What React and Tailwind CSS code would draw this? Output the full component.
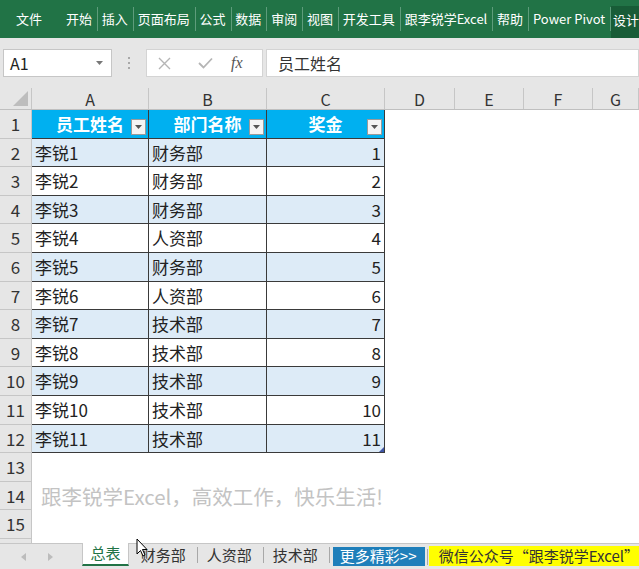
import React from "react";

const ribbon = ["插入", "页面布局", "公式", "数据", "审阅", "视图", "开发工具", "跟李锐学Excel", "帮助", "Power Pivot"];

const cols = [
  { k: "A", w: "w-[117px]" },
  { k: "B", w: "w-[118px]" },
  { k: "C", w: "w-[118px]" },
  { k: "D", w: "w-[70px]" },
  { k: "E", w: "w-[69px]" },
  { k: "F", w: "w-[69px]" },
  { k: "G", w: "flex-1" },
];

const data = [
  ["李锐1", "财务部", 1],
  ["李锐2", "财务部", 2],
  ["李锐3", "财务部", 3],
  ["李锐4", "人资部", 4],
  ["李锐5", "财务部", 5],
  ["李锐6", "人资部", 6],
  ["李锐7", "技术部", 7],
  ["李锐8", "技术部", 8],
  ["李锐9", "技术部", 9],
  ["李锐10", "技术部", 10],
  ["李锐11", "技术部", 11],
];

function RowHead({ n }) {
  return (
    <div className="w-[32px] shrink-0 bg-[#e6e6e6] border-r border-b border-[#c6c6c6] flex items-center justify-center text-[17px] text-[#333]">
      {n}
    </div>
  );
}

function Filter() {
  return (
    <div className="absolute right-[2px] top-[9px] w-[15px] h-[16px] bg-[#f4f4f4] border border-[#9a9a9a] flex items-center justify-center">
      <svg width="7" height="4" viewBox="0 0 7 4"><path d="M0 0h7L3.5 4z" fill="#555" /></svg>
    </div>
  );
}

function HeaderCell({ w, text }) {
  return (
    <div className={`${w} shrink-0 relative bg-[#00b0f0] border-r border-b border-[#3a3a3a] flex items-center justify-center text-white font-bold text-[17px]`}>
      {text}
      <Filter />
    </div>
  );
}

export default function App() {
  return (
    <div className="w-[639px] h-[569px] overflow-hidden flex flex-col bg-white font-['Noto_Sans_CJK_SC','Noto_Sans',sans-serif] relative">
      {/* Ribbon */}
      <div className="h-[38px] shrink-0 bg-[#217346] flex items-center text-white text-[13px] whitespace-nowrap">
        <span className="ml-[16px]">文件</span>
        <span className="ml-[24px]">开始</span>
        {ribbon.map((t) => (
          <React.Fragment key={t}>
            <span className="ml-[5px] mr-[4px] w-px h-[24px] bg-[#5e9c7b]" />
            <span>{t}</span>
          </React.Fragment>
        ))}
        <span className="ml-[5px] w-px h-[24px] bg-[#5e9c7b]" />
        <span className="self-end h-[32px] flex-1 bg-[#185c37] pl-[2px] flex items-center pb-[4px]">设计</span>
      </div>

      {/* Formula bar */}
      <div className="h-[50px] shrink-0 bg-[#e6e6e6] pt-[11px] pb-[11px] flex items-stretch">
        <div className="ml-[3px] w-[109px] bg-white border border-[#c6c6c6] flex items-center justify-between pl-[6px] pr-[8px] text-[16px] text-[#222]">
          <span>A1</span>
          <svg width="7" height="4" viewBox="0 0 7 4"><path d="M0 0h7L3.5 4z" fill="#777" /></svg>
        </div>
        <div className="w-[34px] flex flex-col items-center justify-center gap-[3px]">
          <span className="w-[2px] h-[2px] bg-[#a8a8a8]" />
          <span className="w-[2px] h-[2px] bg-[#a8a8a8]" />
          <span className="w-[2px] h-[2px] bg-[#a8a8a8]" />
        </div>
        <div className="w-[117px] bg-white border border-[#d4d4d4] flex items-center">
          <svg className="ml-[11px]" width="13" height="13" viewBox="0 0 13 13"><path d="M1 1l11 11M12 1L1 12" stroke="#b5b5b5" strokeWidth="1.4" /></svg>
          <svg className="ml-[27px]" width="15" height="12" viewBox="0 0 15 12"><path d="M1 6l4.5 4.5L14 1.5" stroke="#b5b5b5" strokeWidth="1.8" fill="none" /></svg>
          <span className="ml-[18px] text-[16px] italic text-[#555] font-['Liberation_Serif',serif]">fx</span>
        </div>
        <div className="ml-[3px] flex-1 bg-white border border-[#d4d4d4] flex items-center pl-[11px] text-[16px] text-[#333]">
          员工姓名
        </div>
      </div>

      {/* Column headers */}
      <div className="h-[22px] shrink-0 flex bg-[#e6e6e6] border-b border-[#bfbfbf]">
        <div className="w-[32px] shrink-0 border-r border-[#c6c6c6] relative">
          <svg className="absolute right-[3px] bottom-[3px]" width="15" height="15" viewBox="0 0 15 15"><path d="M15 0V15H0z" fill="#bdbdbd" /></svg>
        </div>
        {cols.map((c) => (
          <div key={c.k} className={`${c.w} shrink-0 border-r border-[#c6c6c6] flex items-center justify-center text-[16px] text-[#333]`}>
            {c.k}
          </div>
        ))}
      </div>

      {/* Rows */}
      <div className="flex-1 overflow-hidden">
        <div className="h-[28.6px] flex">
          <RowHead n={1} />
          <HeaderCell w="w-[117px]" text="员工姓名" />
          <HeaderCell w="w-[118px]" text="部门名称" />
          <HeaderCell w="w-[118px]" text="奖金" />
        </div>
        {data.map((r, i) => {
          const bg = i % 2 === 0 ? "bg-[#ddebf7]" : "bg-white";
          const last = i === data.length - 1;
          return (
            <div key={i} className="h-[28.6px] flex text-[17px] text-[#222]">
              <RowHead n={i + 2} />
              <div className={`w-[117px] shrink-0 ${bg} border-r border-b border-[#3a3a3a] flex items-center pl-[3px]`}>{r[0]}</div>
              <div className={`w-[118px] shrink-0 ${bg} border-r border-b border-[#3a3a3a] flex items-center pl-[3px]`}>{r[1]}</div>
              <div className={`w-[118px] shrink-0 ${bg} border-r border-b border-[#3a3a3a] flex items-center justify-end pr-[3px] relative`}>
                {r[2]}
                {last && (
                  <svg className="absolute right-0 bottom-0" width="5" height="5" viewBox="0 0 5 5"><path d="M5 0V5H0z" fill="#3f56a6" /></svg>
                )}
              </div>
            </div>
          );
        })}
        {[13, 14, 15, 16].map((n) => (
          <div key={n} className="h-[28.6px] flex">
            <RowHead n={n} />
            {n === 14 && (
              <div className="pl-[9px] flex items-center text-[20.5px] text-[#c3c3c3] whitespace-nowrap">
                跟李锐学Excel，高效工作，快乐生活!
              </div>
            )}
          </div>
        ))}
      </div>

      {/* Sheet tabs */}
      <div className="h-[26px] shrink-0 bg-[#e6e6e6] border-t border-[#c6c6c6] flex items-stretch text-[15px] whitespace-nowrap relative">
        <div className="w-[88px] flex items-center">
          <svg className="ml-[21px]" width="5" height="8" viewBox="0 0 5 8"><path d="M5 0v8L0 4z" fill="#bcbcbc" /></svg>
          <svg className="ml-[22px]" width="5" height="8" viewBox="0 0 5 8"><path d="M0 0v8l5-4z" fill="#bcbcbc" /></svg>
        </div>
        <div className="w-[50px] -mt-px bg-white border-x border-[#c6c6c6] border-b-2 border-b-[#217346] mb-[3px] flex items-center justify-center text-[#217346]">
          总表
        </div>
        <div className="flex items-center text-[#333] mb-[3px]">
          <span className="ml-[12px]">财务部</span>
          <span className="ml-[11px] mr-[9px] w-px h-[16px] bg-[#a8a8a8]" />
          <span>人资部</span>
          <span className="ml-[11px] mr-[9px] w-px h-[16px] bg-[#a8a8a8]" />
          <span>技术部</span>
          <span className="ml-[11px] w-px h-[16px] bg-[#a8a8a8]" />
        </div>
        <div className="ml-[3px] w-[98px] mt-[3px] mb-[3px] bg-[#1f7fba] text-white flex items-center pl-[7px]">
          更多精彩&gt;&gt;
        </div>
        <span className="ml-[2px] self-center w-px h-[16px] bg-[#a8a8a8]" />
        <div className="ml-px flex-1 mt-[2px] mb-[3px] bg-[#ffff00] text-[#333] flex items-center pl-[10px]">
          微信公众号“跟李锐学Excel”
        </div>
      </div>

      {/* mouse cursor */}
      <svg className="absolute left-[136px] top-[538px]" width="12" height="19" viewBox="0 0 12 19">
        <path d="M1 1v15l3.5-3.5 2.5 5.5 2-1-2.5-5.5H11z" fill="#fff" stroke="#000" strokeWidth="1" />
      </svg>
    </div>
  );
}
